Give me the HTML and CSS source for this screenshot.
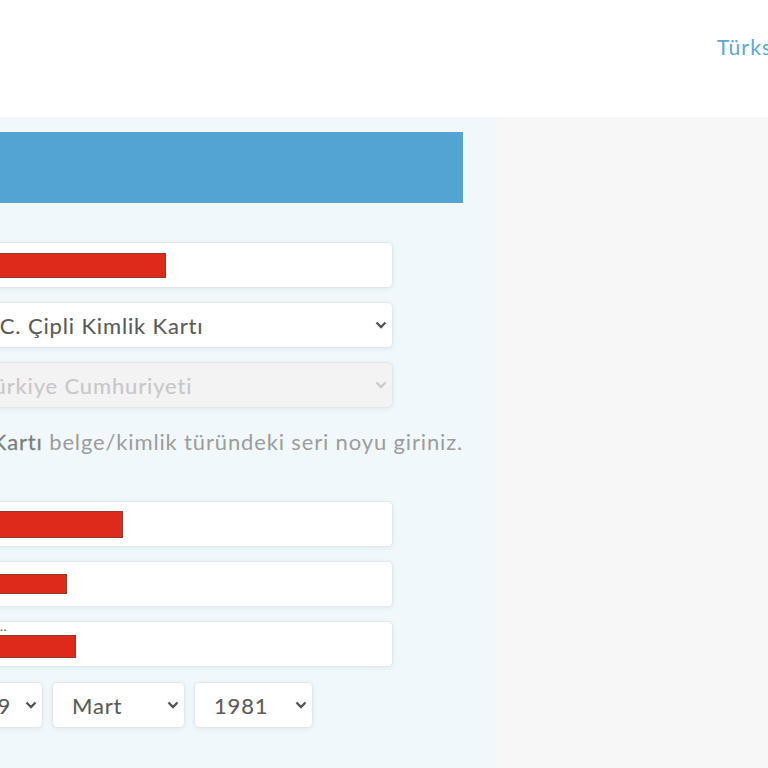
FILE: index.html
```html
<!DOCTYPE html>
<html lang="tr">
<head>
<meta charset="utf-8">
<title>Başvuru</title>
<link rel="stylesheet" href="styles.css">
</head>
<body>
<header class="top">
  <a class="lang" href="#">Türksat</a>
</header>
<main class="page">
  <section class="panel">
    <div class="col">
      <div class="bar"></div>
      <div class="form">
        <div class="field"><span class="redact" style="width:197px"></span></div>
        <div class="field select"><span class="val">T.C. Çipli Kimlik Kartı</span><svg class="chev" viewBox="0 0 12 8"><path d="M1.5 1.5l4.5 4.5 4.5-4.5"/></svg></div>
        <div class="field select disabled"><span class="val">Türkiye Cumhuriyeti</span><svg class="chev" viewBox="0 0 12 8"><path d="M1.5 1.5l4.5 4.5 4.5-4.5"/></svg></div>
        <p class="help"><b>T.C. Çipli Kimlik Kartı</b> belge/kimlik türündeki seri noyu giriniz.</p>
        <div class="field"><span class="redact r2" style="width:154px"></span></div>
        <div class="field"><span class="redact r3" style="width:98px"></span></div>
        <div class="field"><span class="dots">..</span><span class="redact r4" style="width:107px"></span></div>
        <div class="dates">
          <div class="field select day"><span class="val">19</span><svg class="chev" viewBox="0 0 12 8"><path d="M1.5 1.5l4.5 4.5 4.5-4.5"/></svg></div>
          <div class="field select month"><span class="val">Mart</span><svg class="chev" viewBox="0 0 12 8"><path d="M1.5 1.5l4.5 4.5 4.5-4.5"/></svg></div>
          <div class="field select year"><span class="val">1981</span><svg class="chev" viewBox="0 0 12 8"><path d="M1.5 1.5l4.5 4.5 4.5-4.5"/></svg></div>
        </div>
      </div>
    </div>
  </section>
  <div class="rest"></div>
</main>
</body>
</html>
```

FILE: styles.css
```css
html, body {
  margin: 0;
  padding: 0;
  width: 768px;
  height: 768px;
  overflow: hidden;
  background: #f7f7f7;
  font-family: Lato, "Open Sans", "Liberation Sans", sans-serif;
}

.top {
  height: 117px;
  background: #ffffff;
  position: relative;
  white-space: nowrap;
  overflow: hidden;
}

.lang {
  position: absolute;
  left: 717px;
  top: 34px;
  font-size: 21px;
  letter-spacing: 1.2px;
  color: #5aa7d5;
  text-decoration: none;
}

.page {
  display: flex;
  height: 651px;
}

.panel {
  width: 497px;
  flex: none;
  background: #f0f8fc;
  overflow: hidden;
}

.rest {
  flex: 1;
  background: #f7f7f7;
}

.col {
  width: 763px;
  margin-left: -300px;
  padding-top: 15px;
}

.bar {
  height: 71px;
  background: #53a3d3;
}

.form {
  padding: 39px 70px 0 268px;
  display: flex;
  flex-direction: column;
}

.field {
  box-sizing: border-box;
  height: 46px;
  background: #ffffff;
  border: 1px solid #e3e7ea;
  border-radius: 5px;
  box-shadow: 0 1px 4px rgba(170, 190, 200, 0.25);
  display: flex;
  align-items: center;
  padding: 0 5px 0 13px;
  margin-bottom: 14px;
  color: #5a5a5a;
  font-size: 22px;
  letter-spacing: 0.85px;
  -webkit-text-stroke: 0.12px #5a5a5a;
  position: relative;
}

.select .val {
  flex: 1;
  white-space: nowrap;
}

.chev {
  width: 12px;
  height: 8px;
  fill: none;
  stroke: #555555;
  stroke-width: 2.4;
  flex: none;
}

.disabled {
  background: #f3f3f3;
  color: #c7c7c7;
  -webkit-text-stroke: 0.12px #c7c7c7;
}

.disabled .chev {
  stroke: #cbcbcb;
}

.help {
  margin: 6px 0 0 -268px;
  height: 73px;
  width: 763px;
  text-align: right;
  white-space: nowrap;
  font-size: 22px;
  letter-spacing: 0.85px;
  color: #9c9c9c;
}

.help b {
  font-weight: 400;
  color: #7e7e7e;
  -webkit-text-stroke: 0.3px #7e7e7e;
}

.redact {
  display: block;
  height: 25px;
  background: #dd2a1b;
  border: 1px solid #8f3a2c;
  box-sizing: border-box;
  margin-left: -13px;
}

.r2 { height: 27px; }
.r3 { height: 20px; }
.r4 { height: 23px; margin-top: 4px; }

.dots {
  position: absolute;
  left: 31px;
  top: -1px;
  font-size: 12px;
  line-height: 12px;
  letter-spacing: 1px;
  color: #666666;
  -webkit-text-stroke: 0.3px #666666;
}

.dates {
  display: flex;
  gap: 9px;
  margin-top: 1px;
}

.day { width: 75px; }
.month { width: 133px; }
.year { width: 119px; }

.dates .field {
  padding: 0 5px 0 19px;
}

.dates .day.field { padding-left: 15px; }
```
